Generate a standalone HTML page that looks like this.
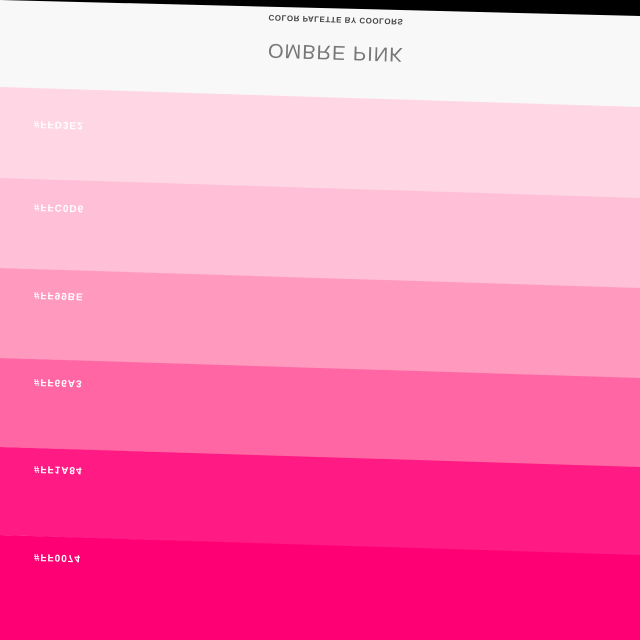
<!DOCTYPE html>
<html><head><style>html,body{margin:0;padding:0;background:#fff;overflow:hidden}svg{display:block}</style></head>
<body>
<svg width="640" height="640" viewBox="0 0 640 640" xmlns="http://www.w3.org/2000/svg">
<rect width="640" height="640" fill="#f8f8f8"/>
<polygon points="0,0 640,0 640,16 0,0" fill="#000"/>
<polygon points="0,87 640,107 640,200 0,178" fill="#ffd6e4"/>
<polygon points="0,178 640,198 640,290 0,268" fill="#ffbfd6"/>
<polygon points="0,268 640,288 640,380 0,358" fill="#ff99be"/>
<polygon points="0,358 640,378 640,468 0,447" fill="#ff66a3"/>
<polygon points="0,447 640,467 640,556 0,535" fill="#ff1a84"/>
<polygon points="0,535 640,555 640,660 0,660" fill="#ff0074"/>
<g font-family="Liberation Sans, sans-serif">
<text transform="translate(336,17) rotate(1.8) scale(1,-1)" text-anchor="middle" font-size="8" font-weight="bold" fill="#444" letter-spacing="0.5">COLOR PALETTE BY COOLORS</text>
<text transform="translate(336,46) rotate(1.8) scale(1,-1)" text-anchor="middle" font-size="20" fill="#777" letter-spacing="1">OMBRE PINK</text>
<g font-size="10" font-weight="bold" fill="#fff" letter-spacing="1">
<text transform="translate(34,121) rotate(1.8) scale(1,-1)">#FFD3E2</text>
<text transform="translate(34,204) rotate(1.8) scale(1,-1)">#FFC0D6</text>
<text transform="translate(34,292) rotate(1.8) scale(1,-1)">#FF99BE</text>
<text transform="translate(34,379) rotate(1.8) scale(1,-1)">#FF66A3</text>
<text transform="translate(34,466) rotate(1.8) scale(1,-1)">#FF1A84</text>
<text transform="translate(34,554) rotate(1.8) scale(1,-1)">#FF0074</text>
</g></g>
</svg>
</body></html>
